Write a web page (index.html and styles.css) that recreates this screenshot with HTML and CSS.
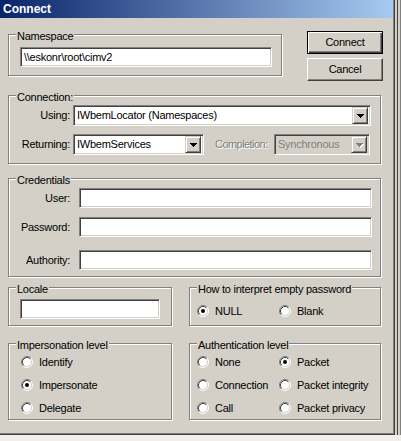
FILE: index.html
```html
<!DOCTYPE html>
<html>
<head>
<meta charset="utf-8">
<link rel="stylesheet" href="styles.css">
</head>
<body>
<svg class="defs" width="0" height="0">
  <symbol id="rb" viewBox="0 0 12 12">
    <circle cx="6" cy="6" r="5" fill="#fff"/>
    <path d="M2.11 9.89A5.5 5.5 0 0 1 9.89 2.11" fill="none" stroke="#808080"/>
    <path d="M9.89 2.11A5.5 5.5 0 0 1 2.11 9.89" fill="none" stroke="#fff"/>
    <path d="M2.82 9.18A4.5 4.5 0 0 1 9.18 2.82" fill="none" stroke="#404040"/>
    <path d="M9.18 2.82A4.5 4.5 0 0 1 2.82 9.18" fill="none" stroke="#d4d0c8"/>
  </symbol>
  <symbol id="rbc" viewBox="0 0 12 12">
    <use href="#rb"/>
    <circle cx="6" cy="6" r="2" fill="#000"/>
  </symbol>
  <symbol id="arr" viewBox="0 0 7 4">
    <path d="M0 0h7v1h-1v1h-1v1h-1v1h-1v-1h-1v-1h-1v-1h-1z"/>
  </symbol>
</svg>
<div class="window">
  <div class="titlebar">Connect</div>
  <div class="client">
    <div class="row1">
      <div class="group g-ns">
        <div class="gtitle">Namespace</div>
        <div class="textbox tb-ns">\\eskonr\root\cimv2</div>
      </div>
      <div class="buttons">
        <div class="btn default">Connect</div>
        <div class="btn">Cancel</div>
      </div>
    </div>

    <div class="group g-conn">
      <div class="gtitle">Connection:</div>
      <div class="frow r-using">
        <span class="flabel">Using:</span>
        <div class="combo c-using">
          <span class="ctext">IWbemLocator (Namespaces)</span>
          <span class="dd"><svg class="arr" width="7" height="4"><use href="#arr"/></svg></span>
        </div>
      </div>
      <div class="frow r-ret">
        <span class="flabel">Returning:</span>
        <div class="combo c-ret">
          <span class="ctext">IWbemServices</span>
          <span class="dd"><svg class="arr" width="7" height="4"><use href="#arr"/></svg></span>
        </div>
        <span class="dlabel">Completion:</span>
        <div class="combo c-comp">
          <span class="ctext">Synchronous</span>
          <span class="dd"><svg class="arr-dis" width="8" height="5" viewBox="0 0 8 5"><path fill="#fff" d="M1 1h7v1h-1v1h-1v1h-1v1h-1v-1h-1v-1h-1v-1h-1z"/><path fill="#808080" d="M0 0h7v1h-1v1h-1v1h-1v1h-1v-1h-1v-1h-1v-1h-1z"/></svg></span>
        </div>
      </div>
    </div>

    <div class="group g-cred">
      <div class="gtitle">Credentials</div>
      <div class="frow c-user">
        <span class="clabel">User:</span>
        <div class="textbox tb-cred"></div>
      </div>
      <div class="frow c-pass">
        <span class="clabel">Password:</span>
        <div class="textbox tb-cred"></div>
      </div>
      <div class="frow c-auth">
        <span class="clabel">Authority:</span>
        <div class="textbox tb-cred"></div>
      </div>
    </div>

    <div class="row3">
      <div class="group g-loc">
        <div class="gtitle">Locale</div>
        <div class="textbox tb-loc"></div>
      </div>
      <div class="group g-how">
        <div class="gtitle">How to interpret empty password</div>
        <div class="rrow">
          <div class="radio"><svg width="12" height="12"><use href="#rbc"/></svg><span>NULL</span></div>
          <div class="radio"><svg width="12" height="12"><use href="#rb"/></svg><span>Blank</span></div>
        </div>
      </div>
    </div>

    <div class="row4">
      <div class="group g-imp">
        <div class="gtitle">Impersonation level</div>
        <div class="rcol">
          <div class="radio"><svg width="12" height="12"><use href="#rb"/></svg><span>Identify</span></div>
          <div class="radio"><svg width="12" height="12"><use href="#rbc"/></svg><span>Impersonate</span></div>
          <div class="radio"><svg width="12" height="12"><use href="#rb"/></svg><span>Delegate</span></div>
        </div>
      </div>
      <div class="group g-auth">
        <div class="gtitle">Authentication level</div>
        <div class="rgrid">
          <div class="radio"><svg width="12" height="12"><use href="#rb"/></svg><span>None</span></div>
          <div class="radio"><svg width="12" height="12"><use href="#rbc"/></svg><span>Packet</span></div>
          <div class="radio"><svg width="12" height="12"><use href="#rb"/></svg><span>Connection</span></div>
          <div class="radio"><svg width="12" height="12"><use href="#rb"/></svg><span>Packet integrity</span></div>
          <div class="radio"><svg width="12" height="12"><use href="#rb"/></svg><span>Call</span></div>
          <div class="radio"><svg width="12" height="12"><use href="#rb"/></svg><span>Packet privacy</span></div>
        </div>
      </div>
    </div>
  </div>
</div>
</body>
</html>
```

FILE: styles.css
```css
* { box-sizing: border-box; }
html, body { margin: 0; padding: 0; }
body {
  width: 401px;
  height: 441px;
  overflow: hidden;
  background: #f0efeb;
  font-family: "Liberation Sans", Arial, sans-serif;
  font-size: 11px;
  line-height: 13px;
  letter-spacing: -0.25px;
  color: #000;
}
.defs { display: block; width: 0; height: 0; overflow: hidden; }

.window {
  width: 395px;
  height: 435px;
  background: #d4d0c8;
  border-right: 1px solid #404040;
  border-bottom: 1px solid #404040;
  box-shadow: inset -1px -1px #808080,
              2px 0 0 #d4d0c8,
              3px 0 0 #404040,
              5px 0 0 #d4d0c8,
              6px 0 0 #808080;
  display: flex;
  flex-direction: column;
}
.titlebar {
  height: 18px;
  margin-right: 1px;
  background: linear-gradient(to right, #0a246a, #a6caf0);
  color: #fff;
  font-weight: bold;
  font-size: 12px;
  letter-spacing: 0;
  line-height: 18px;
  padding-left: 3px;
}
.client {
  padding-left: 8px;
  display: flex;
  flex-direction: column;
  align-items: flex-start;
}

/* group boxes */
.group {
  border: 1px solid #808080;
  box-shadow: inset 1px 1px #fff, 1px 1px #fff;
  display: flex;
  flex-direction: column;
  align-items: flex-start;
}
.gtitle {
  margin: -5px 0 0 7px;
  padding: 0 1px;
  height: 13px;
  line-height: 13px;
  background: #d4d0c8;
  white-space: nowrap;
}

/* controls */
.textbox {
  background: #fff;
  border: 1px solid;
  border-color: #808080 #fff #fff #808080;
  box-shadow: inset 1px 1px #404040, inset -1px -1px #d4d0c8;
  padding: 2px 3px;
  line-height: 14px;
  white-space: nowrap;
}
.btn {
  width: 76px;
  height: 23px;
  border: 1px solid;
  border-color: #fff #404040 #404040 #fff;
  box-shadow: inset -1px -1px #808080;
  text-align: center;
  line-height: 20px;
}
.btn.default {
  border: 1px solid #000;
  box-shadow: inset 1px 1px #fff, inset -1px -1px #404040, inset -2px -2px #808080;
}
.combo {
  height: 21px;
  background: #fff;
  border: 1px solid;
  border-color: #808080 #fff #fff #808080;
  box-shadow: inset 1px 1px #404040, inset -1px -1px #d4d0c8;
  padding: 2px;
  display: flex;
  align-items: center;
}
.ctext { flex: 1; padding-left: 1px; white-space: nowrap; overflow: hidden; }
.dd {
  flex: none;
  width: 16px;
  height: 17px;
  background: #d4d0c8;
  border: 1px solid;
  border-color: #d4d0c8 #404040 #404040 #d4d0c8;
  box-shadow: inset 1px 1px #fff, inset -1px -1px #808080;
  display: flex;
  align-items: center;
  justify-content: center;
}
.arr { display: block; fill: #000; }
.arr-dis { display: block; margin: 1px 0 0 1px; }

/* row 1 */
.row1 { display: flex; align-items: flex-start; height: 63px; }
.g-ns { margin-top: 16px; width: 274px; height: 42px; }
.tb-ns { margin: 4px 0 0 11px; width: 252px; height: 20px; }
.buttons { margin: 13px 0 0 25px; display: flex; flex-direction: column; gap: 4px; }

/* connection */
.g-conn { margin-top: 14px; width: 373px; height: 69px; }
.frow { display: flex; align-items: center; }
.flabel { width: 61px; margin-right: 3px; text-align: right; white-space: nowrap; }
.r-using { margin-top: 1px; }
.c-using { width: 298px; }
.r-ret { margin-top: 8px; align-self: stretch; margin-right: 10px; }
.c-ret { width: 131px; flex: none; }
.dlabel { margin-left: 11px; letter-spacing: -0.55px; color: #808080; text-shadow: 1px 1px #fff; white-space: nowrap; }
.c-comp { flex: none; width: 96px; margin-left: auto; background: #d4d0c8; color: #808080; }

/* credentials */
.g-cred { margin-top: 14px; width: 373px; height: 99px; }
.clabel { width: 61px; margin-right: 9px; text-align: right; white-space: nowrap; }
.tb-cred { width: 293px; height: 20px; }
.c-user { margin-top: 1px; }
.c-pass { margin-top: 9px; }
.c-auth { margin-top: 13px; }

/* row 3 */
.row3 { display: flex; margin-top: 10px; }
.g-loc { width: 164px; height: 39px; }
.tb-loc { margin: 3px 0 0 11px; width: 140px; height: 20px; }
.g-how { margin-left: 17px; width: 192px; height: 39px; }
.rrow { display: flex; margin-top: 8px; padding-left: 7px; }

/* radios */
.radio { display: flex; align-items: center; height: 14px; width: 82px; white-space: nowrap; }
.radio svg { flex: none; display: block; margin-right: 6px; }

/* row 4 */
.row4 { display: flex; margin-top: 17px; }
.g-imp { width: 164px; height: 77px; }
.g-auth { margin-left: 17px; width: 192px; height: 77px; }
.rcol { display: flex; flex-direction: column; gap: 9px; margin-top: 3px; padding-left: 12px; }
.rgrid {
  display: grid;
  grid-template-columns: 82px 100px;
  row-gap: 9px;
  margin-top: 3px;
  padding-left: 7px;
}
```
